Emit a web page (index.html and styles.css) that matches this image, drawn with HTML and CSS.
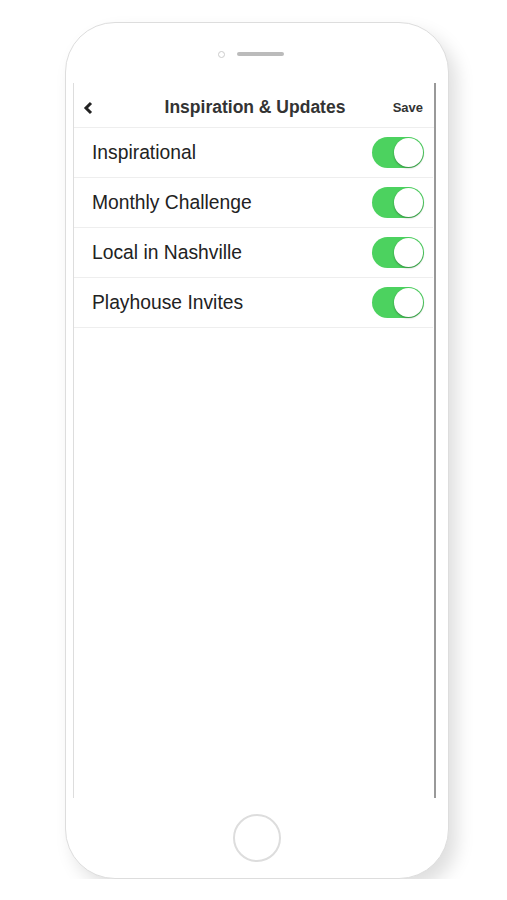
FILE: index.html
```html
<!DOCTYPE html>
<html lang="en">
    <head>
        <meta charset="UTF-8">
        <title>Inspiration &amp; Updates</title>
        <link rel="stylesheet" href="styles.css">
    </head>
    <body>
        <div class="phone">
            <div class="top">
                <span class="camera"></span>
                <span class="speaker"></span>
                <span class="spacer"></span>
            </div>
            <div class="screen">
                <div class="header">
                    <span class="back">
                        <svg width="12" height="14" viewBox="0 0 12 14"><polyline points="8,2 3,7 8,12" fill="none" stroke="#222" stroke-width="3"/></svg>
                    </span>
                    <h1>Inspiration &amp; Updates</h1>
                    <span class="save">Save</span>
                </div>
                <ul class="list">
                    <li><span>Inspirational</span><span class="toggle"><i></i></span></li>
                    <li><span>Monthly Challenge</span><span class="toggle"><i></i></span></li>
                    <li><span>Local in Nashville</span><span class="toggle"><i></i></span></li>
                    <li><span>Playhouse Invites</span><span class="toggle"><i></i></span></li>
                </ul>
            </div>
            <div class="bottom">
                <span class="home"></span>
            </div>
        </div>
    </body>
</html>
```

FILE: styles.css
```css
*{
    margin: 0;
    padding: 0;
    box-sizing: border-box;
}
body{
    background: #fff;
    font-family: "Liberation Sans", Arial, sans-serif;
    padding: 22px 0 0 65px;
}
.phone{
    width: 384px;
    height: 857px;
    border: 1px solid #ddd;
    border-radius: 50px;
    background: #fff;
    box-shadow: 8px 10px 18px rgba(0,0,0,0.13);
}
.top{
    height: 60px;
    display: flex;
    align-items: center;
    justify-content: center;
    gap: 12px;
    padding-left: 6px;
    padding-top: 2px;
}
.camera{
    width: 7px;
    height: 7px;
    border: 1.5px solid #ccc;
    border-radius: 50%;
}
.speaker{
    width: 47px;
    height: 4px;
    border-radius: 2px;
    background: #bbb;
}
.spacer{
    width: 7px;
}
.screen{
    margin-left: 7px;
    width: 363px;
    height: 715px;
    border-left: 1px solid #ddd;
    border-right: 2px solid #999;
}
.header{
    height: 45px;
    display: flex;
    align-items: center;
    border-bottom: 1px solid #eee;
    padding: 5px 11px 0 9px;
}
.back{
    width: 34px;
    display: flex;
    align-items: center;
}
.header h1{
    flex: 1;
    text-align: center;
    font-size: 17.5px;
    font-weight: bold;
    color: #333;
    padding-left: 4px;
}
.save{
    width: 34px;
    text-align: right;
    font-size: 13px;
    font-weight: bold;
    color: #333;
}
.list{
    list-style: none;
}
.list li{
    height: 50px;
    display: flex;
    align-items: center;
    justify-content: space-between;
    border-bottom: 1px solid #eee;
    padding: 0 9px 0 18px;
    margin-right: 1px;
    font-size: 19.3px;
    color: #222;
}
.toggle{
    position: relative;
    width: 52px;
    height: 31px;
    border-radius: 16px;
    background: #4cd25f;
}
.toggle i{
    position: absolute;
    right: 1px;
    top: 1px;
    width: 29px;
    height: 29px;
    border-radius: 50%;
    background: #fff;
    box-shadow: 0 1px 2px rgba(0,0,0,0.35);
}
.bottom{
    height: 79px;
    display: flex;
    align-items: center;
    justify-content: center;
}
.home{
    width: 48px;
    height: 48px;
    border: 2px solid #ddd;
    border-radius: 50%;
}
```
